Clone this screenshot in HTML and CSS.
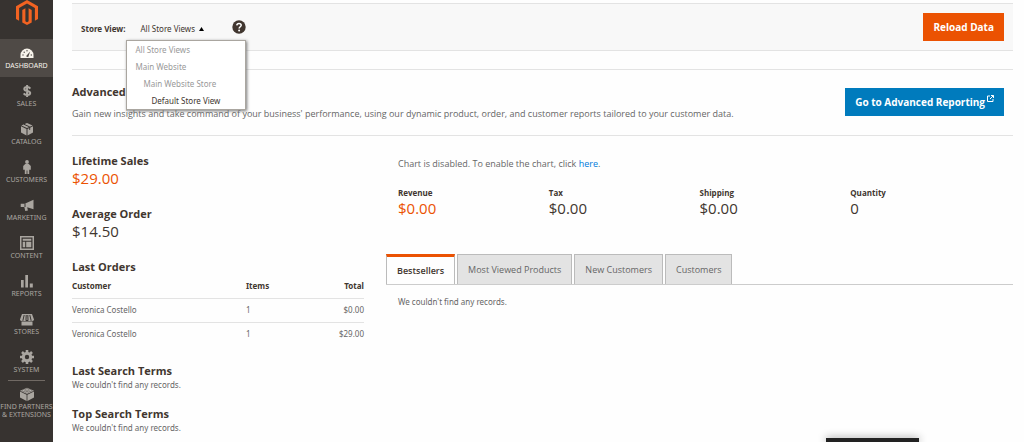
FILE: index.html
```html
<!DOCTYPE html>
<html lang="en">
<head>
<meta charset="utf-8">
<title>Dashboard</title>
<link rel="stylesheet" href="styles.css">
</head>
<body>
<div class="app">
  <nav class="sidebar" aria-label="Main menu">
    <a class="logo" href="#" aria-label="Home">
      <svg viewBox="0 0 22 25"><path fill="#f26322" d="M11 0 0 6.300v12.600l3.100 1.800V8.100L11 3.600l7.900 4.500v12.600l3.100-1.800V6.300z"/><path fill="#f26322" d="M9.400 21.300V8.200l-3.100 1.700v12.600L11 25l4.700-2.500V9.900l-3.100-1.700v13.100L11 22.200z"/></svg>
    </a>
    <a class="nav-item nav-current" href="#">
      <svg viewBox="0 0 14 14"><path d="M.5 12V9a6.500 6.500 0 0 1 13 0v3z"/><path class="cut" d="m6 10.300 4.100-4.800-1.900 5.800z"/><circle class="cut" cx="3" cy="9" r=".7"/><circle class="cut" cx="4.200" cy="6.300" r=".7"/><circle class="cut" cx="7" cy="4.800" r=".7"/><circle class="cut" cx="11.300" cy="9" r=".7"/></svg>
      <span>DASHBOARD</span>
    </a>
    <a class="nav-item" href="#">
      <svg viewBox="0 0 14 14"><path class="line" stroke-width="2" d="M10.300 4.600C9.600 3.500 8.500 3 7.200 3 5.500 3 4.300 3.700 4.300 4.900c0 2.900 5.900 1.300 5.900 4.200 0 1.300-1.300 2-3.100 2-1.500 0-2.700-.6-3.400-1.700M7.100 1v12"/></svg>
      <span>SALES</span>
    </a>
    <a class="nav-item" href="#">
      <svg viewBox="0 0 14 14"><path d="M7 1 1.400 3.400 7 6l5.600-2.600zM1 4.300v6.300l5.500 2.900V6.900zM13 4.300v6.300l-5.500 2.900V6.900z"/><path class="cutline" d="m4 2.300 5.700 2.600v3"/></svg>
      <span>CATALOG</span>
    </a>
    <a class="nav-item" href="#">
      <svg viewBox="0 0 14 14"><circle cx="7" cy="2" r="1.900"/><path d="M5.200 4.100h3.600L10.800 6v3.800H9.200V14H7.400v-3.500h-.8V14H4.800V9.800H3.200V6z"/></svg>
      <span>CUSTOMERS</span>
    </a>
    <a class="nav-item" href="#">
      <svg viewBox="0 0 14 14"><path d="M13.500 1.800v9.500L7.200 9.300l.7 3.200-2.600.4L4.300 9H.7V5.700h4z"/><path class="cutline" d="M5 5.500V9"/></svg>
      <span>MARKETING</span>
    </a>
    <a class="nav-item" href="#">
      <svg viewBox="0 0 14 14"><path fill-rule="evenodd" d="M0 0h14v14H0zM1.500 1.500v11h11v-11zM2.700 2.700h8.600v2H2.700zM2.700 5.700h2.500v5.600H2.700zM6.200 5.700h5.100v5.600H6.200z"/></svg>
      <span>CONTENT</span>
    </a>
    <a class="nav-item" href="#">
      <svg viewBox="0 0 14 14"><path d="M1 6h2.700v7.500H1zM5.300 1H8v12.500H5.300zM9.800 9.500h3v4h-3z"/></svg>
      <span>REPORTS</span>
    </a>
    <a class="nav-item" href="#">
      <svg viewBox="0 0 14 14"><path d="M2 2h10l2 5.500c0 1.800-2.500 1.800-3 .5-.4 1.300-2.600 1.300-3 0H6c-.4 1.300-2.600 1.300-3 0-.5 1.300-3 1.300-3-.5zM1.500 9.600h11v3.900h-11z"/><path class="cutline" d="M4.200 3 3 8m3.200-5L6 8m1.800-5L8 8m1.800-5L11 8"/></svg>
      <span>STORES</span>
    </a>
    <a class="nav-item" href="#">
      <svg viewBox="0 0 14 14"><circle class="line" stroke-width="3" cx="7" cy="7" r="3.700"/><path class="line" stroke-width="2.600" d="M7 0v2.500M7 11.500V14M0 7h2.500M11.500 7H14M2 2l1.800 1.800M10.200 10.200 12 12M12 2l-1.800 1.800M3.800 10.200 2 12"/></svg>
      <span>SYSTEM</span>
    </a>
    <a class="nav-item nav-partners" href="#">
      <svg viewBox="0 0 14 14"><path d="M7 .8 0 3.700 7 7l7-3.300zM0 4.500v6L6.600 14V7.700zM14 4.500v6L7.400 14V7.700z"/><g class="studs"><ellipse cx="7" cy="2.300" rx="1.500" ry=".8"/><ellipse cx="3.700" cy="3.700" rx="1.500" ry=".8"/><ellipse cx="10.300" cy="3.700" rx="1.500" ry=".8"/><ellipse cx="7" cy="5.200" rx="1.500" ry=".8"/></g></svg>
      <span>FIND PARTNERS<br>&amp; EXTENSIONS</span>
    </a>
  </nav>

  <main class="page">
    <section class="store-bar">
      <span class="store-label" id="store-label">Store View:</span>
      <div class="switcher">
        <button class="switcher-button" type="button" aria-expanded="true" aria-describedby="store-label">All Store Views<svg viewBox="0 0 5 4"><path d="M2.500 0 5 4H0z"/></svg></button>
        <ul class="switcher-menu">
          <li>All Store Views</li>
          <li>Main Website</li>
          <li class="level-store">Main Website Store</li>
          <li class="level-view"><a href="#">Default Store View</a></li>
        </ul>
      </div>
      <a class="help" href="#" aria-label="Help">
        <svg viewBox="0 0 14 14"><circle cx="7" cy="7" r="6.700" fill="#41362f"/><path d="M4.800 5.400C4.900 4 5.800 3.400 7 3.400c1.300 0 2.200.7 2.200 1.800 0 1.500-2.100 1.600-2.100 3.300" fill="none" stroke="#fff" stroke-width="1.500"/><circle cx="7.100" cy="10.600" r="1" fill="#fff"/></svg>
      </a>
      <button class="action action-primary" type="button">Reload Data</button>
    </section>

    <section class="reporting">
      <div class="reporting-text">
        <h2>Advanced Reporting</h2>
        <p>Gain new insights and take command of your business' performance, using our dynamic product, order, and customer reports tailored to your customer data.</p>
      </div>
      <a class="action action-report" href="#">Go to Advanced Reporting<svg viewBox="0 0 7 7"><path d="M3 1H.5v5.500H6V4M4 .5h2.500V3M6.500.5 3 4"/></svg></a>
    </section>

    <div class="columns">
      <div class="summary">
        <section class="stat">
          <h2>Lifetime Sales</h2>
          <strong class="amount accent">$29.00</strong>
        </section>
        <section class="stat">
          <h2>Average Order</h2>
          <strong class="amount">$14.50</strong>
        </section>
        <section class="orders">
          <h2>Last Orders</h2>
          <table>
            <thead><tr><th>Customer</th><th>Items</th><th class="total">Total</th></tr></thead>
            <tbody>
              <tr><td>Veronica Costello</td><td>1</td><td class="total">$0.00</td></tr>
              <tr><td>Veronica Costello</td><td>1</td><td class="total">$29.00</td></tr>
            </tbody>
          </table>
        </section>
        <section class="terms">
          <h2>Last Search Terms</h2>
          <p>We couldn't find any records.</p>
        </section>
        <section class="terms">
          <h2>Top Search Terms</h2>
          <p>We couldn't find any records.</p>
        </section>
      </div>

      <div class="details">
        <p class="chart-note">Chart is disabled. To enable the chart, click <a href="#">here</a>.</p>
        <div class="totals">
          <div><h3>Revenue</h3><strong class="amount accent">$0.00</strong></div>
          <div><h3>Tax</h3><strong class="amount">$0.00</strong></div>
          <div><h3>Shipping</h3><strong class="amount">$0.00</strong></div>
          <div><h3>Quantity</h3><strong class="amount">0</strong></div>
        </div>
        <div class="tabs" role="tablist">
          <button class="tab tab-active" type="button" role="tab" aria-selected="true">Bestsellers</button>
          <button class="tab" type="button" role="tab">Most Viewed Products</button>
          <button class="tab" type="button" role="tab">New Customers</button>
          <button class="tab" type="button" role="tab">Customers</button>
        </div>
        <p class="tab-panel" role="tabpanel">We couldn't find any records.</p>
      </div>
    </div>
  </main>
</div>
<div class="bottom-panel"></div>
</body>
</html>
```
FILE: styles.css
```css
* { box-sizing: border-box; }
html { height: 100%; }
body {
  margin: 0;
  height: 100%;
  overflow: hidden;
  background: #fefefe;
  color: #666;
  font: 8px/12px "Noto Sans", "Open Sans", sans-serif;
}
h2, h3, p, ul { margin: 0; padding: 0; }
a { color: inherit; text-decoration: none; }
button { border: 0; margin: 0; padding: 0; background: none; color: inherit; font: inherit; }
svg { display: block; }
h2, h3, .amount, .action, .tab, .reporting p, .chart-note { font-family: "Open Sans", "Noto Sans", sans-serif; }
h2 { color: #41362f; font-size: 11px; line-height: 16px; font-weight: 700; }
h3 { color: #41362f; font-size: 8px; line-height: 12px; font-weight: 700; }

.app { display: flex; min-height: 100%; }

.sidebar { flex: none; width: 53px; background: #373330; color: #aaa6a0; }
.logo { display: flex; justify-content: center; height: 39px; }
.logo svg { width: 22px; height: 25px; }
.nav-item {
  display: flex;
  flex-direction: column;
  align-items: center;
  gap: 2px;
  height: 38px;
  padding-top: 7px;
  font-size: 7px;
  line-height: 8px;
  text-align: center;
  white-space: nowrap;
}
.nav-item svg { width: 14px; height: 14px; fill: currentColor; }
.nav-current { background: #4f4a46; color: #f7f3eb; }
.nav-item .cut { fill: #4f4a46; }
.nav-item .line { fill: none; stroke: currentColor; }
.nav-item .cutline { fill: none; stroke: #373330; stroke-width: 1; }
.nav-item .studs { fill: #ccc8c2; stroke: #373330; stroke-width: 0.4; }
.nav-partners { height: auto; padding-top: 0; }
.nav-partners::before { content: ""; width: 37px; height: 1px; margin: -1px 0 4px; background: #716a64; }

.page { flex: 1; min-width: 0; padding: 3px 11px 0 19px; }

.store-bar {
  display: flex;
  align-items: center;
  height: 48px;
  padding: 0 9px;
  border-top: 1px solid #e3e3e3;
  border-bottom: 1px solid #e3e3e3;
  background: #f8f8f8;
}
.store-label { color: #41362f; font-weight: 700; padding-top: 4px; }
.switcher { position: relative; margin-left: 15px; padding-top: 4px; }
.switcher-button { display: flex; align-items: center; gap: 4px; color: #41362f; }
.switcher-button svg { width: 5px; height: 4px; fill: #000; }
.switcher-menu {
  position: absolute;
  z-index: 1;
  top: 21px;
  left: -14px;
  width: 120px;
  padding: 0 8px;
  border: 1px solid #aaa6a0;
  background: #fff;
  box-shadow: 1px 1px 3px #777;
  color: #999;
  line-height: 17px;
  list-style: none;
}
.level-store { padding-left: 8px; }
.level-view { padding-left: 16px; color: #41362f; }
.help { margin-left: 28px; }
.help svg { width: 14px; height: 14px; }

.action {
  display: flex;
  align-items: flex-start;
  height: 28px;
  padding: 0 10px;
  color: #fff;
  font-size: 10px;
  line-height: 28px;
  font-weight: 700;
  white-space: nowrap;
}
.action-primary { margin-left: auto; background: #eb5202; }
.action-report { background: #007bbd; }
.action-report svg { width: 7px; height: 7px; margin: 7px 0 0 2px; fill: none; stroke: #fff; }

.reporting {
  display: flex;
  align-items: center;
  justify-content: space-between;
  height: 67px;
  margin-top: 18px;
  padding: 0 9px 1px 0;
  border-top: 1px solid #e3e3e3;
  border-bottom: 1px solid #e3e3e3;
}
.reporting-text { padding-bottom: 1px; }
.reporting h2 { margin-bottom: 8px; }
.reporting p, .chart-note, .tab { font-size: 9px; }

.columns { display: grid; grid-template-columns: 292fr 627fr; gap: 22px; padding-top: 17px; }
.amount { display: block; color: #41362f; font-size: 15px; line-height: 18px; font-weight: 400; }
.accent { color: #eb5202; }
.stat { height: 53px; }
.orders { margin-bottom: 17px; }
table { width: 100%; border-collapse: collapse; table-layout: fixed; }
th, td { height: 24px; padding: 0; text-align: left; font-weight: 400; }
th { height: 23px; color: #41362f; font-weight: 700; }
th:first-child { width: 174px; }
tbody td { border-top: 1px solid #e3e3e3; }
th.total, td.total { text-align: right; }
.terms { margin-bottom: 15px; }

.chart-note { padding: 5px 12px 0; }
.chart-note a { color: #007bdb; }
.totals { display: grid; grid-template-columns: repeat(4, 1fr); padding: 17px 12px 0; }
.tabs { display: flex; gap: 2px; margin-top: 37px; border-bottom: 1px solid #ccc; }
.tab { height: 30px; padding: 0 10px; border: 1px solid #bbb; border-bottom: 0; background: #e3e3e3; }
.tab-active { margin-bottom: -1px; border-top: 3px solid #eb5202; background: #fefefe; color: #41362f; font-weight: 600; }
.tab-panel { padding: 11px 12px; }

.bottom-panel {
  position: fixed;
  right: 105px;
  bottom: 0;
  width: 93px;
  height: 4px;
  background: #222;
  box-shadow: 0 0 8px #888;
}
```
